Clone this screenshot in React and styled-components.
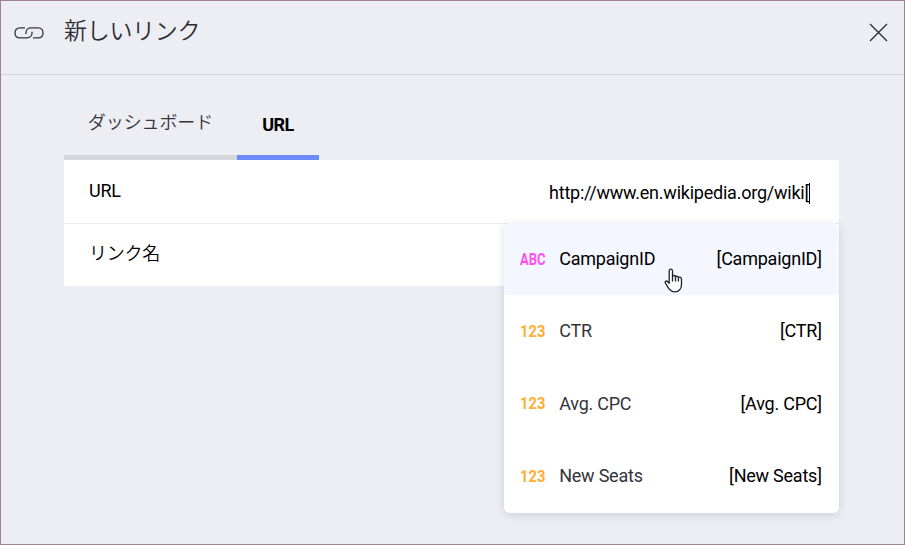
import React from "react";
import styled, { createGlobalStyle } from "styled-components";

const GlobalStyle = createGlobalStyle`
  * { box-sizing: border-box; }
  body { margin: 0; background: #edeef4; }
`;

const Dialog = styled.main`
  width: 905px;
  height: 545px;
  overflow: hidden;
  border: 1px solid #9e8493;
  background: #edeef4;
  color: #000;
  font: 400 18px/24px Roboto, "Noto Sans CJK JP", sans-serif;
  letter-spacing: -0.23px;
`;

const Header = styled.header`
  display: flex;
  align-items: flex-start;
  height: 74px;
  padding: 0 16px 0 13px;
  border-bottom: 1px solid #d5d6dc;
`;

const LinkIcon = styled.svg`
  width: 30px;
  height: 14px;
  margin-top: 25px;
`;

const Title = styled.h1`
  flex: 1;
  margin: 11px 0 0 20px;
  color: #2b2c33;
  font: 350 23px/34px "Noto Sans CJK JP", sans-serif;
  letter-spacing: -0.3px;
`;

const CloseButton = styled.button`
  width: 19px;
  height: 19px;
  margin-top: 22px;
  padding: 0;
  border: 0;
  background: none;

  svg { display: block; }
`;

const Content = styled.section`
  width: 775px;
  margin: 20px 0 0 63px;
`;

const Tabs = styled.nav`
  display: flex;
  height: 65px;
`;

const Tab = styled.button`
  width: ${({ $width }) => $width}px;
  padding: ${({ $active }) => ($active ? "0 0 1px" : "0 0 4px")};
  border: 0;
  border-bottom: 5px solid ${({ $active }) => ($active ? "#6e8afa" : "#d6d7dc")};
  background: none;
  color: ${({ $active }) => ($active ? "#000" : "#34353c")};
  font: ${({ $active }) => ($active ? 700 : 350)} 18px/24px Roboto, "Noto Sans CJK JP", sans-serif;
  letter-spacing: ${({ $active }) => ($active ? "-0.5px" : "-0.1px")};
  white-space: nowrap;
`;

const Form = styled.div`
  position: relative;
  background: #fff;
`;

const Field = styled.div`
  display: flex;
  align-items: center;
  justify-content: space-between;
  height: ${({ $height }) => $height}px;
  padding: 0 28px 0 25px;
  border-bottom: ${({ $divided }) => ($divided ? "1px solid #ebecf0" : "0")};
`;

const FieldLabel = styled.label`
  margin-bottom: ${({ $lift }) => $lift}px;
  font-family: ${({ $light }) => ($light ? '"Noto Sans CJK JP", sans-serif' : "inherit")};
  font-weight: ${({ $light }) => ($light ? 350 : 400)};
`;

const FieldValue = styled.span`
  display: flex;
  align-items: center;
  margin-top: 3px;
`;

const Caret = styled.span`
  width: 1px;
  height: 21px;
  margin-right: 1px;
  background: #000;
`;

const Suggestions = styled.ul`
  position: absolute;
  top: 63px;
  right: 0;
  width: 335px;
  height: 290px;
  margin: 0;
  padding: 0;
  overflow: hidden;
  border-radius: 6px;
  background: #fff;
  box-shadow: 0 2px 10px rgba(35, 38, 65, 0.15);
  list-style: none;
`;

const Suggestion = styled.li`
  display: flex;
  align-items: center;
  height: 72.28px;
  padding: 0 17.3px 0 15px;
  background: ${({ $active }) => ($active ? "#f4f7ff" : "#fff")};
  color: ${({ $active }) => ($active ? "#000" : "#34353a")};
`;

const TypeBadge = styled.span`
  width: 27px;
  margin-top: 1.4px;
  color: ${({ $text }) => ($text ? "#ff4fef" : "#ffae32")};
  font-size: 16px;
  font-weight: 700;
  letter-spacing: 0;
  text-align: center;

  span {
    display: inline-block;
    transform: scaleX(${({ $text }) => ($text ? 0.81 : 0.92)});
    margin: 0 -5px;
  }
`;

const Name = styled.span`
  flex: 1;
  margin-left: 13.2px;
`;

const Token = styled.span`
  color: #000;
`;

const Pointer = styled.svg`
  position: absolute;
  top: 45px;
  left: 160px;
`;

const fields = [
  { name: "CampaignID", type: "ABC" },
  { name: "CTR", type: "123" },
  { name: "Avg. CPC", type: "123" },
  { name: "New Seats", type: "123" },
];

export default function App() {
  return (
    <Dialog>
      <GlobalStyle />
      <Header>
        <LinkIcon viewBox="0 0 30 14" fill="none" stroke="#34353d" strokeWidth="1.3">
          <path d="M11 1.9H6C2.9 1.9 1 4 1 6.9s1.9 4.9 5 4.9h6.8c3.1 0 5.2-2 5.2-4.5V5.8" />
          <path d="M19 11.8h5c3.1 0 5-2 5-4.9s-1.9-5-5-5h-6.8c-3.1 0-5.2 2-5.2 4.5v1.5" />
        </LinkIcon>
        <Title>新しいリンク</Title>
        <CloseButton aria-label="閉じる">
          <svg width="19" height="19" viewBox="0 0 19 19" fill="none" stroke="#292a31" strokeWidth="1.3">
            <path d="m1 1 17 17M18 1 1 18" />
          </svg>
        </CloseButton>
      </Header>
      <Content>
        <Tabs>
          <Tab $width={173}>ダッシュボード</Tab>
          <Tab $width={82} $active>URL</Tab>
        </Tabs>
        <Form>
          <Field $height={64} $divided>
            <FieldLabel $lift={1}>URL</FieldLabel>
            <FieldValue>http://www.en.wikipedia.org/wiki[<Caret /></FieldValue>
          </Field>
          <Field $height={62}>
            <FieldLabel $lift={6} $light>リンク名</FieldLabel>
          </Field>
          <Suggestions>
            {fields.map(({ name, type }, index) => (
              <Suggestion key={name} $active={index === 0}>
                <TypeBadge $text={type === "ABC"}><span>{type}</span></TypeBadge>
                <Name>{name}</Name>
                <Token>[{name}]</Token>
              </Suggestion>
            ))}
            <Pointer width="20" height="26" viewBox="0 0 20 26" fill="#fff" stroke="#20212c" strokeWidth="1.3" strokeLinejoin="round">
              <path d="M5.2 15.2V3c0-2.5 3.3-2.5 3.3 0v5.2c.8-1.1 2.6-.9 3 .5.9-.8 2.5-.5 2.9.8 1.3-.7 3.1 0 3.1 1.7v5.1c0 3.8-2.1 7.6-6.8 7.6-3.2 0-4.6-1.5-6.2-3.7L1.4 15c-.9-1.4.9-2.7 2.1-1.5Z" />
              <path d="M8.5 7.5v6M11.5 8.5v5M14.4 9.5v4" />
            </Pointer>
          </Suggestions>
        </Form>
      </Content>
    </Dialog>
  );
}
